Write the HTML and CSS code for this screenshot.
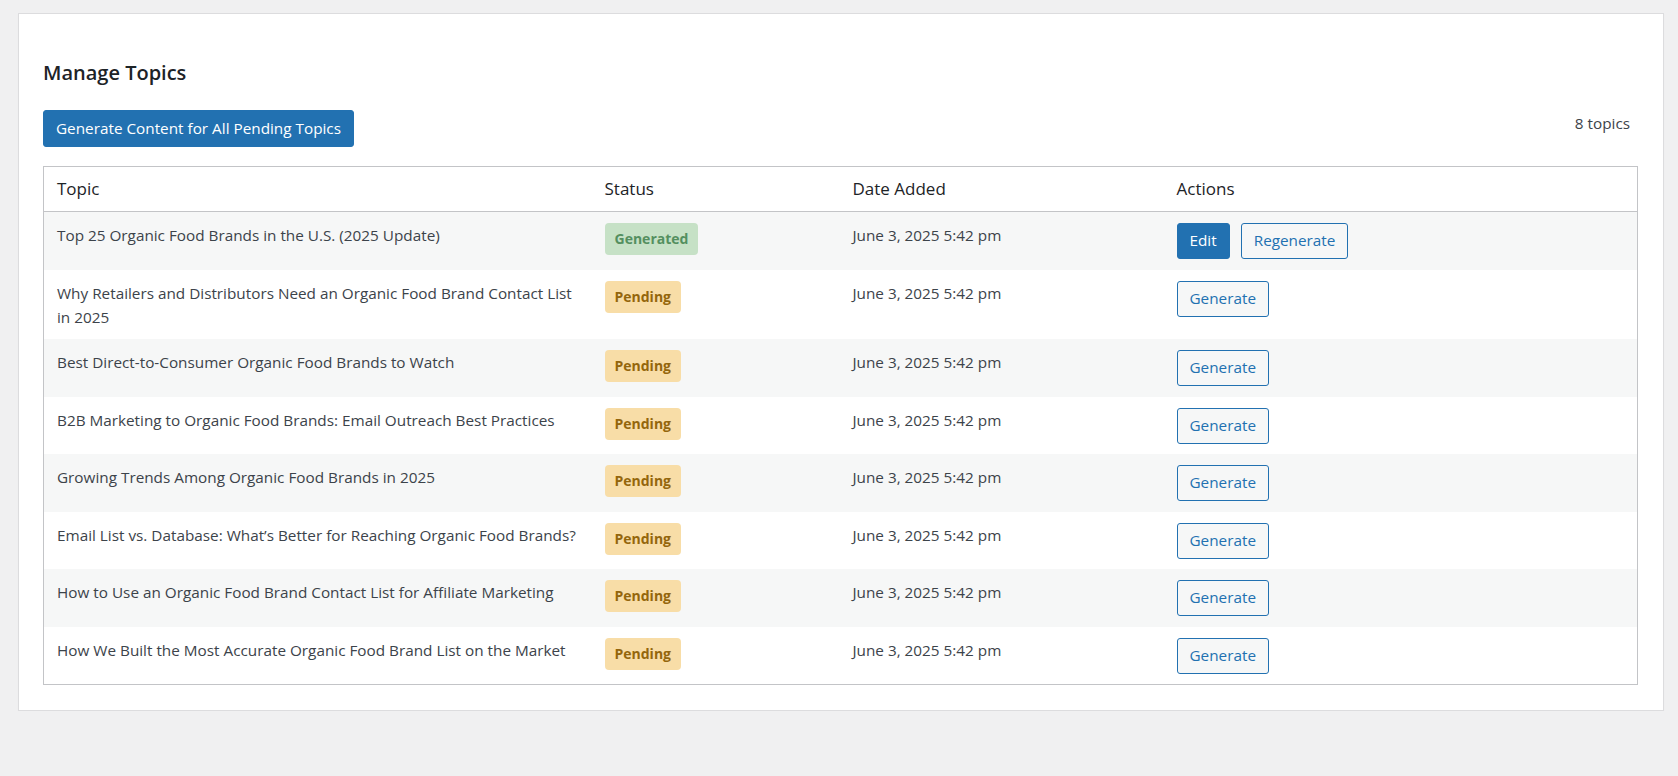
FILE: index.html
```html
<!DOCTYPE html>
<html lang="en">
<head>
<meta charset="utf-8">
<title>Manage Topics</title>
<link rel="stylesheet" href="styles.css">
</head>
<body>
<div class="wrap">
  <div class="card">
    <h2 class="title">Manage Topics</h2>
    <div class="toolbar">
      <button class="btn btn-primary btn-large" type="button">Generate Content for All Pending Topics</button>
      <span class="count">8 topics</span>
    </div>
    <table class="topics">
      <colgroup>
        <col class="c-topic">
        <col class="c-status">
        <col class="c-date">
        <col class="c-actions">
      </colgroup>
      <thead>
        <tr><th>Topic</th><th>Status</th><th>Date Added</th><th>Actions</th></tr>
      </thead>
      <tbody>
        <tr>
          <td class="topic">Top 25 Organic Food Brands in the U.S. (2025 Update)</td>
          <td><span class="mark mark-generated">Generated</span></td>
          <td>June 3, 2025 5:42 pm</td>
          <td><div class="actions"><button class="btn btn-primary" type="button">Edit</button><button class="btn" type="button">Regenerate</button></div></td>
        </tr>
        <tr>
          <td class="topic">Why Retailers and Distributors Need an Organic Food Brand Contact List in 2025</td>
          <td><span class="mark mark-pending">Pending</span></td>
          <td>June 3, 2025 5:42 pm</td>
          <td><div class="actions"><button class="btn" type="button">Generate</button></div></td>
        </tr>
        <tr>
          <td class="topic">Best Direct-to-Consumer Organic Food Brands to Watch</td>
          <td><span class="mark mark-pending">Pending</span></td>
          <td>June 3, 2025 5:42 pm</td>
          <td><div class="actions"><button class="btn" type="button">Generate</button></div></td>
        </tr>
        <tr>
          <td class="topic">B2B Marketing to Organic Food Brands: Email Outreach Best Practices</td>
          <td><span class="mark mark-pending">Pending</span></td>
          <td>June 3, 2025 5:42 pm</td>
          <td><div class="actions"><button class="btn" type="button">Generate</button></div></td>
        </tr>
        <tr>
          <td class="topic">Growing Trends Among Organic Food Brands in 2025</td>
          <td><span class="mark mark-pending">Pending</span></td>
          <td>June 3, 2025 5:42 pm</td>
          <td><div class="actions"><button class="btn" type="button">Generate</button></div></td>
        </tr>
        <tr>
          <td class="topic">Email List vs. Database: What’s Better for Reaching Organic Food Brands?</td>
          <td><span class="mark mark-pending">Pending</span></td>
          <td>June 3, 2025 5:42 pm</td>
          <td><div class="actions"><button class="btn" type="button">Generate</button></div></td>
        </tr>
        <tr>
          <td class="topic">How to Use an Organic Food Brand Contact List for Affiliate Marketing</td>
          <td><span class="mark mark-pending">Pending</span></td>
          <td>June 3, 2025 5:42 pm</td>
          <td><div class="actions"><button class="btn" type="button">Generate</button></div></td>
        </tr>
        <tr>
          <td class="topic">How We Built the Most Accurate Organic Food Brand List on the Market</td>
          <td><span class="mark mark-pending">Pending</span></td>
          <td>June 3, 2025 5:42 pm</td>
          <td><div class="actions"><button class="btn" type="button">Generate</button></div></td>
        </tr>
      </tbody>
    </table>
  </div>
</div>
</body>
</html>
```

FILE: styles.css
```css
* { box-sizing: border-box; }

html, body {
  margin: 0;
  padding: 0;
  background: #f0f0f1;
}

body {
  font-family: "Open Sans", "Noto Sans", sans-serif;
  font-size: 15.3px;
  color: #3c434a;
}

.wrap {
  padding: 13px 14px 0 18px;
}

.card {
  background: #fff;
  border: 1px solid #dcdcde;
  box-shadow: 0 1px 1px rgba(0, 0, 0, 0.04);
  padding: 45px 25px 25px 24px;
}

.title {
  margin: 0 0 23px;
  font-size: 20px;
  line-height: 28px;
  font-weight: 600;
  color: #1d2327;
}

.toolbar {
  display: flex;
  justify-content: space-between;
  align-items: flex-start;
  margin-bottom: 19px;
}

.count {
  padding-top: 1px;
  padding-right: 8px;
  line-height: 24px;
  color: #3c434a;
}

.btn {
  display: inline-flex;
  align-items: center;
  justify-content: center;
  height: 36px;
  padding: 0 12px;
  margin: 0;
  border: 1px solid #2271b1;
  border-radius: 3px;
  background: #f6f7f7;
  color: #2271b1;
  font-family: inherit;
  font-size: 15.3px;
  line-height: 1;
  cursor: pointer;
}

.btn-primary {
  background: #2271b1;
  color: #fff;
}

.btn-large {
  height: 37px;
}

.topics {
  width: 100%;
  border-collapse: collapse;
  table-layout: fixed;
  border: 1px solid #c3c4c7;
}

.c-topic { width: 548px; }
.c-status { width: 248px; }
.c-date { width: 324px; }

.topics th {
  text-align: left;
  font-weight: 400;
  font-size: 17px;
  line-height: 24px;
  color: #1d2327;
  padding: 10px 13px 10px;
  border-bottom: 1px solid #c3c4c7;
}

.topics td {
  vertical-align: top;
  padding: 11px 13px 10.5px;
  line-height: 24px;
}

.topics td.topic {
  padding-right: 6px;
}

.topics tbody tr:nth-child(odd) {
  background: #f6f7f7;
}

.mark {
  display: inline-flex;
  align-items: center;
  height: 32px;
  padding: 0 10px;
  border-radius: 4px;
  font-size: 14px;
  font-weight: 700;
  line-height: 1;
}

.mark-generated {
  background: #c6e1c6;
  color: #548f5f;
}

.mark-pending {
  background: #f8dda7;
  color: #94660c;
}

.actions {
  display: flex;
  gap: 11px;
}
```
